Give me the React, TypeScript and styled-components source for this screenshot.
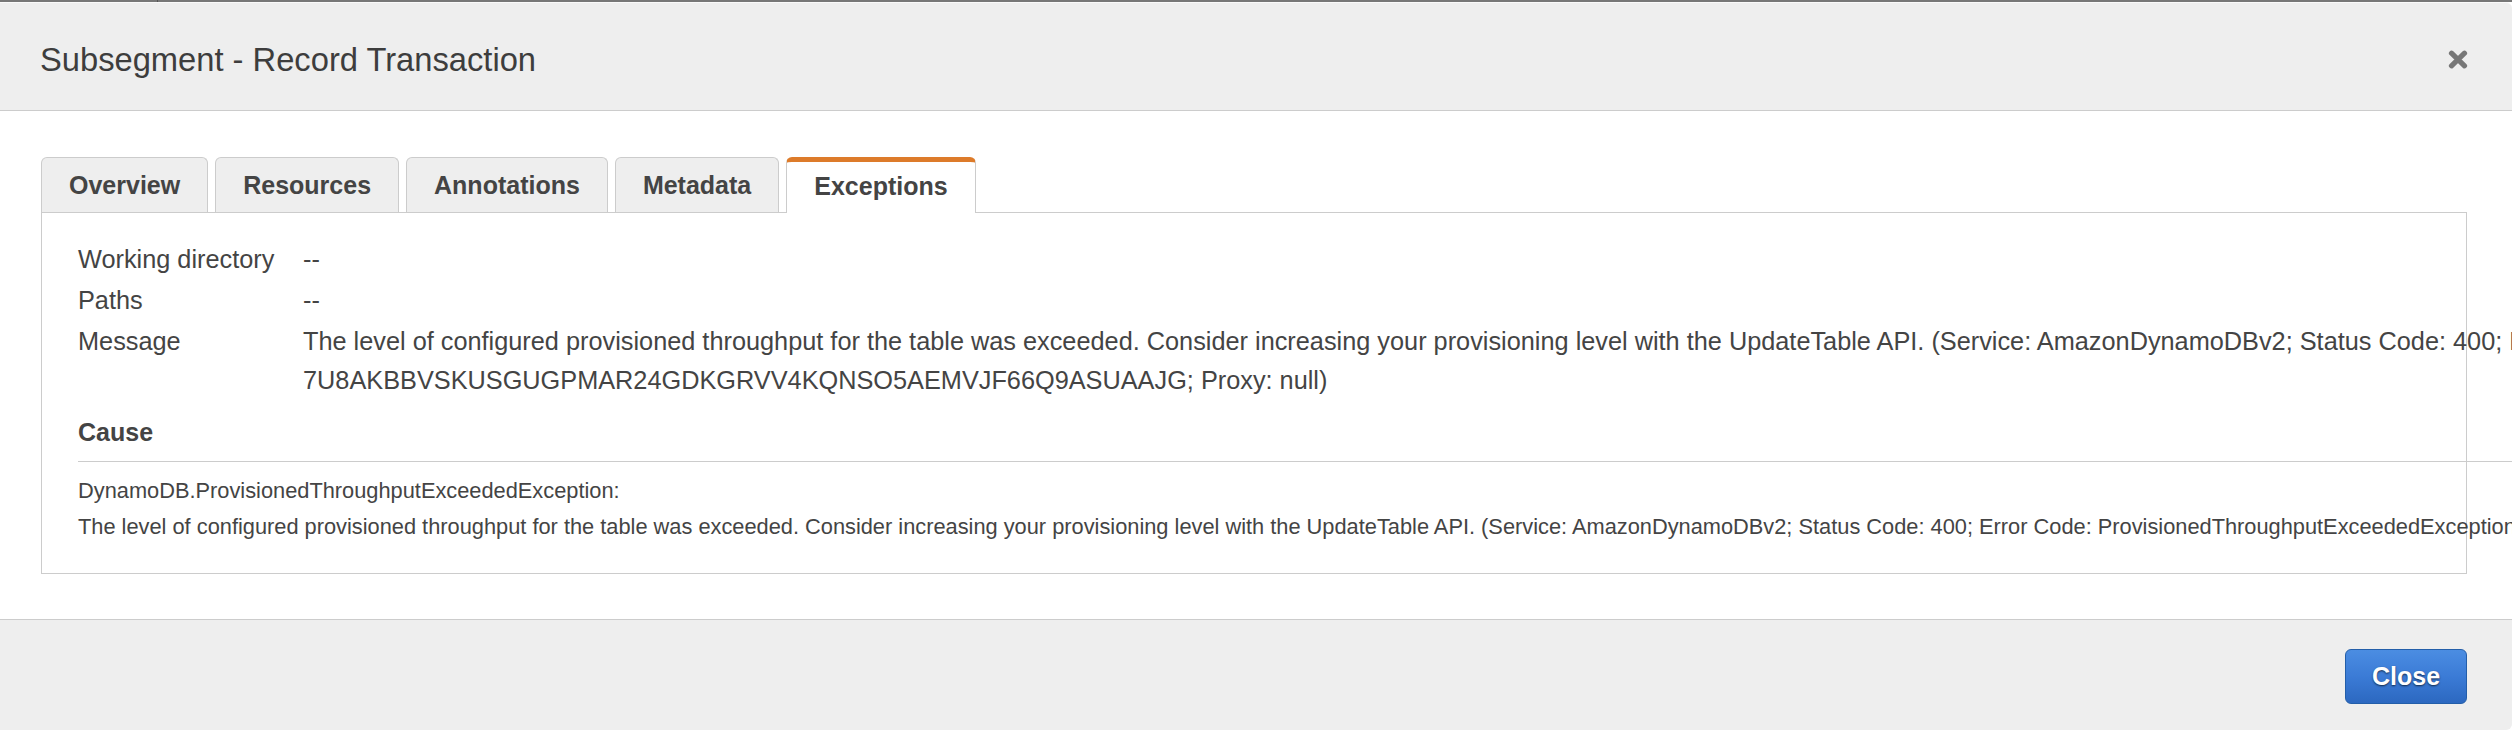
import React from "react";
import styled, { createGlobalStyle } from "styled-components";

const GlobalStyle = createGlobalStyle`
  html, body {
    margin: 0;
    padding: 0;
    overflow: hidden;
    background: #ffffff;
  }
  body {
    font-family: "Liberation Sans", Arial, Helvetica, sans-serif;
    color: #444444;
  }
  * { box-sizing: border-box; }
`;

const Page = styled.div`
  width: 2512px;
  height: 734px;
  display: flex;
  flex-direction: column;
`;

const BackdropStrip = styled.div`
  height: 2px;
  flex: none;
  background: linear-gradient(to right, #777 157px, #555 157px, #555 158px, #777 158px);
`;

const Modal = styled.div`
  display: flex;
  flex-direction: column;
  border-radius: 0 6px 6px 0;
`;

const Header = styled.div`
  height: 109px;
  display: flex;
  align-items: center;
  justify-content: space-between;
  padding: 6px 44px 0 40px;
  background: #eeeeee;
  border-top: 1px solid #fafafa;
  border-bottom: 1px solid #cccccc;
  border-top-right-radius: 6px;
`;

const Title = styled.h1`
  margin: 0;
  font-size: 32.7px;
  line-height: 37px;
  font-weight: 400;
  color: #3d3d3d;
`;

const CloseIcon = styled.button`
  width: 20px;
  height: 19px;
  padding: 0;
  border: 0;
  background: none;
  display: flex;
  cursor: pointer;
`;

const Body = styled.div`
  background: #ffffff;
  padding: 46px 45px 45px 41px;
`;

const TabList = styled.div`
  display: flex;
  align-items: flex-end;
  gap: 7px;
`;

const Tab = styled.div<{ $active?: boolean }>`
  height: ${(p) => (p.$active ? "56px" : "55px")};
  margin-bottom: ${(p) => (p.$active ? "-1px" : "0")};
  position: relative;
  z-index: ${(p) => (p.$active ? 1 : 0)};
  padding: 0 27px;
  display: flex;
  align-items: center;
  font-size: 25px;
  font-weight: 700;
  color: #444444;
  background: ${(p) => (p.$active ? "#ffffff" : "#eeeeee")};
  border: 1px solid #cccccc;
  border-bottom: none;
  border-top: ${(p) => (p.$active ? "5px solid #dd7b2a" : "1px solid #cccccc")};
  padding-bottom: ${(p) => (p.$active ? "3px" : "0")};
  border-radius: 6px 6px 0 0;
`;

const Panel = styled.div`
  border: 1px solid #cccccc;
  padding: 27px 36px 28px 36px;
  background: #ffffff;
`;

const InfoRow = styled.div`
  display: grid;
  grid-template-columns: 225px 1fr;
  font-size: 25.3px;
  line-height: 39px;
  margin-bottom: 2px;
`;

const Label = styled.div`
  color: #444444;
`;

const Value = styled.div`
  color: #444444;
  white-space: nowrap;
`;

const Line = styled.span`
  display: block;
  white-space: nowrap;
`;

const CauseSection = styled.div`
  margin-top: 13px;
  width: max-content;
  min-width: 100%;
`;

const CauseHeading = styled.h3`
  margin: 0;
  font-size: 25px;
  line-height: 39px;
  font-weight: 700;
  color: #444444;
  padding-bottom: 9px;
  border-bottom: 1px solid #cccccc;
`;

const CauseBody = styled.div`
  padding-top: 11px;
  font-size: 21.8px;
  line-height: 36px;
  color: #444444;
`;

const Footer = styled.div`
  background: #eeeeee;
  border-top: 1px solid #cccccc;
  padding: 29px 45px 26px 0;
  display: flex;
  justify-content: flex-end;
  border-bottom-right-radius: 6px;
`;

const PrimaryButton = styled.button`
  width: 122px;
  height: 55px;
  border: 1px solid #235ea9;
  border-radius: 6px;
  background: linear-gradient(to bottom, #4b8de2 0%, #3b7bd6 50%, #2c68c0 100%);
  color: #ffffff;
  font-family: "Liberation Sans", Arial, Helvetica, sans-serif;
  font-size: 25px;
  font-weight: 700;
  text-shadow: 0 1px 2px rgba(0, 0, 0, 0.65);
  cursor: pointer;
  padding: 0;
`;

const tabs = ["Overview", "Resources", "Annotations", "Metadata", "Exceptions"];

const messageLine1 =
  "The level of configured provisioned throughput for the table was exceeded. Consider increasing your provisioning level with the UpdateTable API. (Service: AmazonDynamoDBv2; Status Code: 400; Error Code: ProvisionedThroughputExceededException; Request ID:";
const messageLine2 = "7U8AKBBVSKUSGUGPMAR24GDKGRVV4KQNSO5AEMVJF66Q9ASUAAJG; Proxy: null)";

const causeMessage =
  "The level of configured provisioned throughput for the table was exceeded. Consider increasing your provisioning level with the UpdateTable API. (Service: AmazonDynamoDBv2; Status Code: 400; Error Code: ProvisionedThroughputExceededException; Request ID: 7U8AKBBVSKUSGUGPMAR24GDKGRVV4KQNSO5AEMVJF66Q9ASUAAJG; Proxy: null)";

export default function App() {
  return (
    <>
      <GlobalStyle />
      <Page>
        <BackdropStrip />
        <Modal>
          <Header>
            <Title>Subsegment - Record Transaction</Title>
            <CloseIcon aria-label="Close">
              <svg width="20" height="19" viewBox="0 0 20 19">
                <path
                  d="M3.5 3.2 L16.5 15.8 M16.5 3.2 L3.5 15.8"
                  stroke="#777777"
                  strokeWidth="5.2"
                  strokeLinecap="round"
                  fill="none"
                />
              </svg>
            </CloseIcon>
          </Header>
          <Body>
            <TabList>
              {tabs.map((t) => (
                <Tab key={t} $active={t === "Exceptions"}>
                  {t}
                </Tab>
              ))}
            </TabList>
            <Panel>
              <InfoRow>
                <Label>Working directory</Label>
                <Value>--</Value>
              </InfoRow>
              <InfoRow>
                <Label>Paths</Label>
                <Value>--</Value>
              </InfoRow>
              <InfoRow>
                <Label>Message</Label>
                <Value>
                  <Line>{messageLine1}</Line>
                  <Line>{messageLine2}</Line>
                </Value>
              </InfoRow>
              <CauseSection>
                <CauseHeading>Cause</CauseHeading>
                <CauseBody>
                  <Line>DynamoDB.ProvisionedThroughputExceededException:</Line>
                  <Line>{causeMessage}</Line>
                </CauseBody>
              </CauseSection>
            </Panel>
          </Body>
          <Footer>
            <PrimaryButton>Close</PrimaryButton>
          </Footer>
        </Modal>
      </Page>
    </>
  );
}
